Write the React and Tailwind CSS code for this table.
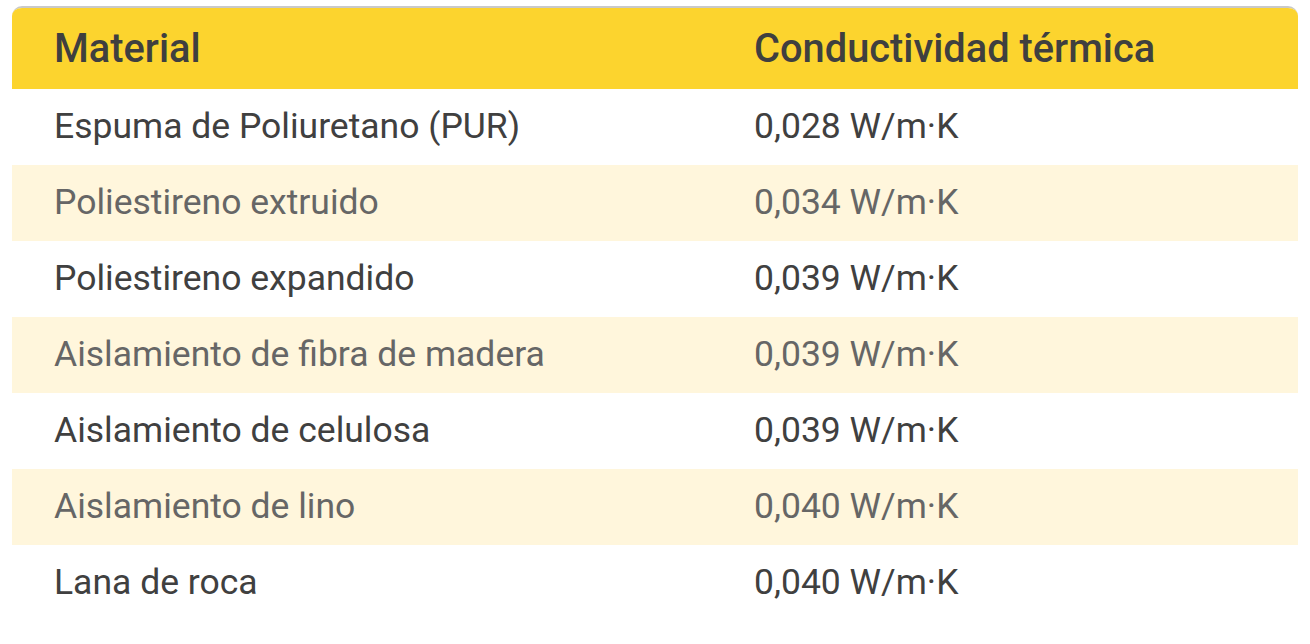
export default function App() {
  const rows = [
    ["Espuma de Poliuretano (PUR)", "0,028 W/m·K"],
    ["Poliestireno extruido", "0,034 W/m·K"],
    ["Poliestireno expandido", "0,039 W/m·K"],
    ["Aislamiento de fibra de madera", "0,039 W/m·K"],
    ["Aislamiento de celulosa", "0,039 W/m·K"],
    ["Aislamiento de lino", "0,040 W/m·K"],
    ["Lana de roca", "0,040 W/m·K"],
  ];
  return (
    <div className="w-[1310px] h-[644px] bg-white pt-[6px] px-[12px] overflow-hidden" style={{ fontFamily: "Roboto, 'Noto Sans', sans-serif" }}>
      <div className="rounded-t-[10px] border-t-2 border-[#c9c9c9] overflow-hidden">
        <div className="grid grid-cols-[700px_1fr] h-[81px] items-center bg-[#fcd42e] text-[#3f3f3f] text-[39.8px] font-medium">
          <div className="pl-[42px]">Material</div>
          <div className="pl-[42px]">Conductividad térmica</div>
        </div>
        {rows.map(([a, b], i) => (
          <div
            key={i}
            className={
              "grid grid-cols-[700px_1fr] h-[76px] items-center text-[35.5px] " +
              (i % 2 === 1 ? "bg-[#fff6dc] text-[#666666]" : "bg-white text-[#404040]")
            }
          >
            <div className="pl-[42px]">{a}</div>
            <div className="pl-[42px]">{b}</div>
          </div>
        ))}
      </div>
    </div>
  );
}
